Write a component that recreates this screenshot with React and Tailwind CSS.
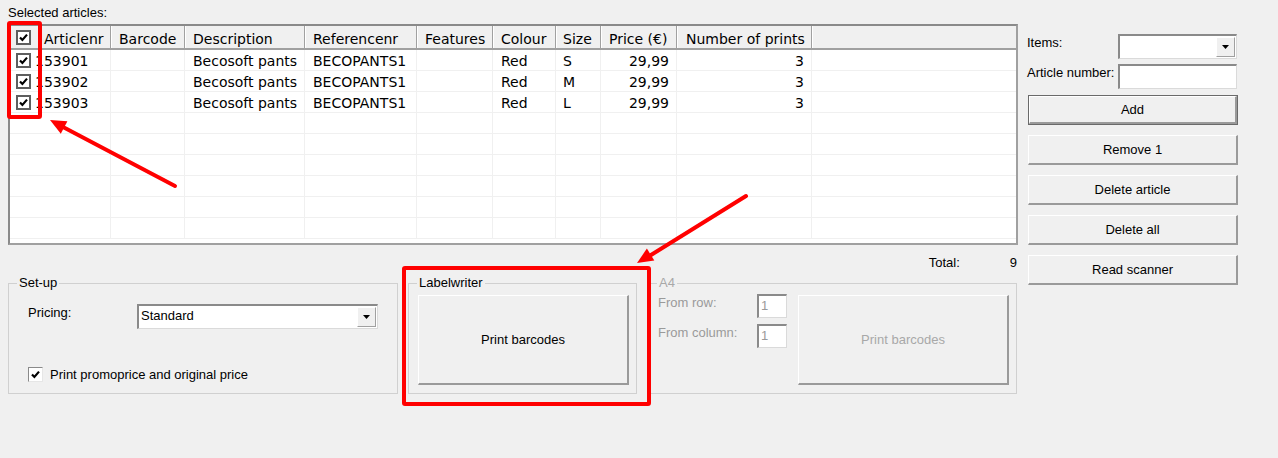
import React from "react";

const rows = [
  ["153901", "Becosoft pants", "BECOPANTS1", "Red", "S", "29,99", "3"],
  ["153902", "Becosoft pants", "BECOPANTS1", "Red", "M", "29,99", "3"],
  ["153903", "Becosoft pants", "BECOPANTS1", "Red", "L", "29,99", "3"],
  null, null, null, null, null, null,
];

function CheckMark() {
  return (
    <svg width="9" height="9" viewBox="0 0 9 9">
      <path d="M1 4.4 L3.4 6.9 L8 1.6" stroke="#000" strokeWidth="2.2" fill="none" />
    </svg>
  );
}

function GridCheck() {
  return (
    <div className="w-[15px] h-[15px] shrink-0 border-2 border-[#5e5e5e] bg-white flex items-center justify-center">
      <CheckMark />
    </div>
  );
}

function DropArrow() {
  return (
    <svg width="7" height="4" viewBox="0 0 7 4">
      <polygon points="0,0 7,0 3.5,4" fill="#000" />
    </svg>
  );
}

function Select({ className, children }) {
  return (
    <div className={"flex items-stretch border-t-2 border-l-2 border-r border-b border-t-[#8a8a8a] border-l-[#8a8a8a] border-r-[#dadada] border-b-[#dadada] bg-white " + className}>
      <div className="flex-1 pl-[2px] leading-[20px]">{children}</div>
      <div className="w-[19px] my-[1px] mr-[1px] bg-[#f0f0f0] border-t border-l border-b border-r border-t-white border-l-white border-b-[#a0a0a0] border-r-[#a0a0a0] flex items-center justify-center">
        <DropArrow />
      </div>
    </div>
  );
}

function RaisedButton({ className, children, disabled }) {
  return (
    <div className={"flex items-center justify-center bg-[#f0f0f0] border-t border-l border-b-2 border-r-2 border-t-white border-l-white border-b-[#9a9a9a] border-r-[#9a9a9a] leading-[16px] " + (disabled ? "text-[#a8a8a8] " : "") + className}>
      {children}
    </div>
  );
}

function Table() {
  return (
    <div className="h-[221px] border-2 border-t-[#8a8a8a] border-l-[#8a8a8a] border-r-[#a0a0a0] border-b-[#a0a0a0] bg-white overflow-hidden font-['DejaVu_Sans',Verdana,sans-serif] text-[14px]">
      <div className="flex h-[24px] border-b-2 border-b-[#a0a0a0] bg-[#f0f0f0] leading-[16px] whitespace-nowrap">
        <div className="w-[30px] h-full border-l border-l-white border-r border-r-[#a0a0a0] flex items-center pl-[5px]"><GridCheck /></div>
        <div className="w-[71px] h-full border-l border-l-white border-r border-r-[#a0a0a0] pt-[5px] pl-[3px]">Articlenr</div>
        <div className="w-[74px] h-full border-l border-l-white border-r border-r-[#a0a0a0] pt-[5px] pl-[7px]">Barcode</div>
        <div className="w-[120px] h-full border-l border-l-white border-r border-r-[#a0a0a0] pt-[5px] pl-[7px]">Description</div>
        <div className="w-[112px] h-full border-l border-l-white border-r border-r-[#a0a0a0] pt-[5px] pl-[7px]">Referencenr</div>
        <div className="w-[76px] h-full border-l border-l-white border-r border-r-[#a0a0a0] pt-[5px] pl-[7px]">Features</div>
        <div className="w-[63px] h-full border-l border-l-white border-r border-r-[#a0a0a0] pt-[5px] pl-[7px]">Colour</div>
        <div className="w-[45px] h-full border-l border-l-white border-r border-r-[#a0a0a0] pt-[5px] pl-[6px]">Size</div>
        <div className="w-[76px] h-full border-l border-l-white border-r border-r-[#a0a0a0] pt-[5px] pl-[7px]">Price (€)</div>
        <div className="w-[135px] h-full border-l border-l-white border-r border-r-[#a0a0a0] pt-[5px] pl-[8px] overflow-hidden">Number of prints</div>
        <div className="flex-1 h-full border-l border-l-white"></div>
      </div>
      {rows.map((r, i) => (
        <div key={i} className="flex h-[21px] border-b border-b-[#f0f0f0] leading-[18px] whitespace-nowrap">
          <div className="w-[101px] h-full border-r border-r-[#f0f0f0] flex items-start pt-[2px] pl-[6px]">
            {r ? (
              <>
                <div className="mt-[1px]"><GridCheck /></div>
                <span className="ml-[4px]">{r[0]}</span>
              </>
            ) : null}
          </div>
          <div className="w-[74px] h-full border-r border-r-[#f0f0f0]"></div>
          <div className="w-[120px] h-full border-r border-r-[#f0f0f0] pt-[2px] pl-[8px]">{r ? r[1] : ""}</div>
          <div className="w-[112px] h-full border-r border-r-[#f0f0f0] pt-[2px] pl-[8px]">{r ? r[2] : ""}</div>
          <div className="w-[76px] h-full border-r border-r-[#f0f0f0]"></div>
          <div className="w-[63px] h-full border-r border-r-[#f0f0f0] pt-[2px] pl-[8px]">{r ? r[3] : ""}</div>
          <div className="w-[45px] h-full border-r border-r-[#f0f0f0] pt-[2px] pl-[7px]">{r ? r[4] : ""}</div>
          <div className="w-[76px] h-full border-r border-r-[#f0f0f0] pt-[2px] pr-[7px] text-right">{r ? r[5] : ""}</div>
          <div className="w-[135px] h-full border-r border-r-[#f0f0f0] pt-[2px] pr-[7px] text-right">{r ? r[6] : ""}</div>
          <div className="flex-1 h-full"></div>
        </div>
      ))}
    </div>
  );
}

function GroupBox({ className, legend, legendClass, children }) {
  return (
    <div className={"relative h-full border border-[#d0d0d0] " + className}>
      <span className={"absolute left-[8px] top-[-9px] px-[2px] bg-[#f0f0f0] leading-[16px] " + (legendClass || "")}>{legend}</span>
      {children}
    </div>
  );
}

export default function App() {
  return (
    <div className="relative w-[1278px] h-[458px] overflow-hidden bg-[#f0f0f0] text-black font-['Liberation_Sans',Arial,sans-serif] text-[13px]">
      <div className="flex">
        <div className="ml-[8px] w-[1010px]">
          <div className="h-[24px] pt-[5px] leading-[16px]">Selected articles:</div>
          <Table />
          <div className="h-[38px] flex justify-end items-start pt-[10px] pr-[1px] leading-[16px]">
            <span>Total:</span>
            <span className="ml-[50px]">9</span>
          </div>
          <div className="flex h-[111px]">
            <GroupBox className="w-[390px] pl-[19px] pt-[20px]" legend="Set-up">
              <div className="flex items-start h-[25px]">
                <div className="w-[109px] pt-[1px] leading-[16px]">Pricing:</div>
                <Select className="w-[241px] h-[25px]">Standard</Select>
              </div>
              <div className="flex items-center mt-[38px] h-[15px]">
                <div className="w-[15px] h-[15px] border border-t-[#8a8a8a] border-l-[#8a8a8a] border-r-[#e6e6e6] border-b-[#e6e6e6] bg-white flex items-center justify-center">
                  <CheckMark />
                </div>
                <span className="ml-[7px] leading-[16px]">Print promoprice and original price</span>
              </div>
            </GroupBox>
            <GroupBox className="w-[229px] ml-[10px] pl-[9px] pt-[11px]" legend="Labelwriter">
              <RaisedButton className="w-[211px] h-[90px]">Print barcodes</RaisedButton>
            </GroupBox>
            <GroupBox className="w-[369px] ml-[11px] pl-[9px] pt-[10px] flex" legend="A4" legendClass="text-[#a8a8a8]">
              <div className="w-[140px] text-[#9a9a9a]">
                <div className="flex items-start h-[24px]">
                  <div className="w-[99px] pt-[1px] leading-[16px]">From row:</div>
                  <div className="w-[30px] h-[24px] border-t-2 border-l-2 border-r border-b border-t-[#8a8a8a] border-l-[#8a8a8a] border-r-[#dadada] border-b-[#dadada] bg-white pl-[2px] leading-[20px]">1</div>
                </div>
                <div className="flex items-start h-[24px] mt-[6px]">
                  <div className="w-[99px] pt-[1px] leading-[16px]">From column:</div>
                  <div className="w-[30px] h-[24px] border-t-2 border-l-2 border-r border-b border-t-[#8a8a8a] border-l-[#8a8a8a] border-r-[#dadada] border-b-[#dadada] bg-white pl-[2px] leading-[20px]">1</div>
                </div>
              </div>
              <RaisedButton className="w-[211px] h-[90px] mt-[1px]" disabled>Print barcodes</RaisedButton>
            </GroupBox>
          </div>
        </div>

        <div className="ml-[9px] w-[211px] pt-[34px]">
          <div className="flex items-start h-[25px]">
            <div className="w-[91px] pt-[1px] leading-[16px]">Items:</div>
            <Select className="w-[119px] h-[25px]"></Select>
          </div>
          <div className="flex items-start h-[25px] mt-[5px]">
            <div className="w-[91px] pt-[1px] leading-[16px] whitespace-nowrap">Article number:</div>
            <div className="w-[119px] h-[25px] border-t-2 border-l-2 border-r border-b border-t-[#8a8a8a] border-l-[#8a8a8a] border-r-[#dadada] border-b-[#dadada] bg-white"></div>
          </div>
          <div className="ml-[1px] mt-[6px] w-[210px] h-[30px] border border-[#6a6a6a]">
            <RaisedButton className="w-full h-full">Add</RaisedButton>
          </div>
          <RaisedButton className="ml-[1px] mt-[10px] w-[210px] h-[30px]">Remove 1</RaisedButton>
          <RaisedButton className="ml-[1px] mt-[10px] w-[210px] h-[30px]">Delete article</RaisedButton>
          <RaisedButton className="ml-[1px] mt-[10px] w-[210px] h-[30px]">Delete all</RaisedButton>
          <RaisedButton className="ml-[1px] mt-[10px] w-[210px] h-[30px]">Read scanner</RaisedButton>
        </div>
      </div>

      <svg className="absolute inset-0 pointer-events-none" width="1278" height="458" viewBox="0 0 1278 458">
        <rect x="9" y="23" width="31" height="94" rx="1" fill="none" stroke="#ff0000" strokeWidth="4" />
        <rect x="404" y="268" width="245" height="136" rx="1" fill="none" stroke="#ff0000" strokeWidth="4" />
        <line x1="175" y1="186" x2="63" y2="127" stroke="#ff0000" strokeWidth="4" strokeLinecap="round" />
        <polygon points="50,120 67.4,121.3 60.8,133.7" fill="#ff0000" />
        <line x1="746" y1="196" x2="651" y2="255" stroke="#ff0000" strokeWidth="4" strokeLinecap="round" />
        <polygon points="637,263 654.3,260.6 646.9,248.6" fill="#ff0000" />
      </svg>
    </div>
  );
}
